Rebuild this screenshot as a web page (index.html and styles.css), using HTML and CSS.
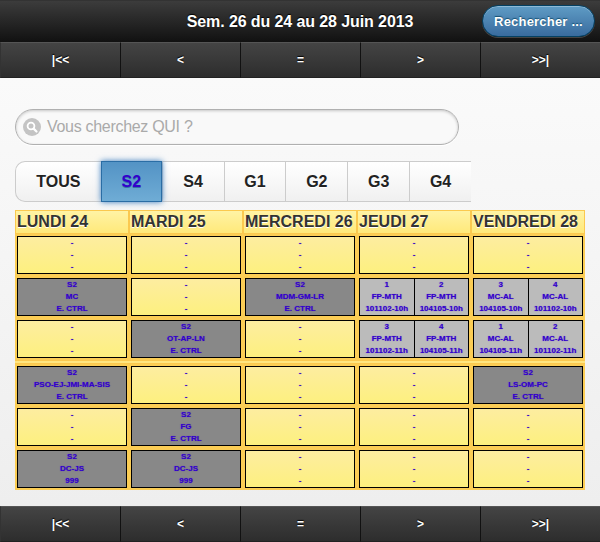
FILE: index.html
```html
<!DOCTYPE html>
<html lang="fr">
<head>
<meta charset="utf-8">
<title>Planning</title>
<link rel="stylesheet" href="styles.css">
</head>
<body>
<header class="topbar">
  <h1 class="title">Sem. 26 du 24 au 28 Juin 2013</h1>
  <a class="search-btn">Rechercher ...</a>
</header>
<nav class="navbar">
  <a class="nav-item">|&lt;&lt;</a><a class="nav-item">&lt;</a><a class="nav-item">=</a><a class="nav-item">&gt;</a><a class="nav-item">&gt;&gt;|</a>
</nav>
<main class="content">
  <div class="search-field">
    <span class="search-icon">
      <svg viewBox="0 0 18 18" width="18" height="18"><circle cx="9" cy="9" r="9" fill="#c4c4c4"/><circle cx="8" cy="8" r="3.4" fill="none" stroke="#fff" stroke-width="1.8"/><path d="M10.6 10.6 13.5 13.5" stroke="#fff" stroke-width="2.2" stroke-linecap="round"/></svg>
    </span>
    <span class="placeholder">Vous cherchez QUI ?</span>
  </div>
  <div class="segments">
    <a class="seg seg-tous">TOUS</a><a class="seg seg-active">S2</a><a class="seg">S4</a><a class="seg">G1</a><a class="seg">G2</a><a class="seg">G3</a><a class="seg">G4</a>
  </div>
  <div class="schedule">
    <div class="day">LUNDI 24</div><div class="day">MARDI 25</div><div class="day">MERCREDI 26</div><div class="day">JEUDI 27</div><div class="day">VENDREDI 28</div>

    <div class="cell"><div class="box"><p>-</p><p>-</p><p>-</p></div></div>
    <div class="cell"><div class="box"><p>-</p><p>-</p><p>-</p></div></div>
    <div class="cell"><div class="box"><p>-</p><p>-</p><p>-</p></div></div>
    <div class="cell"><div class="box"><p>-</p><p>-</p><p>-</p></div></div>
    <div class="cell"><div class="box"><p>-</p><p>-</p><p>-</p></div></div>

    <div class="cell"><div class="box busy"><p>S2</p><p>MC</p><p>E. CTRL</p></div></div>
    <div class="cell"><div class="box"><p>-</p><p>-</p><p>-</p></div></div>
    <div class="cell"><div class="box busy"><p>S2</p><p>MDM-GM-LR</p><p>E. CTRL</p></div></div>
    <div class="cell"><div class="box split"><div class="half"><p>1</p><p>FP-MTH</p><p>101102-10h</p></div><div class="half"><p>2</p><p>FP-MTH</p><p>104105-10h</p></div></div></div>
    <div class="cell"><div class="box split"><div class="half"><p>3</p><p>MC-AL</p><p>104105-10h</p></div><div class="half"><p>4</p><p>MC-AL</p><p>101102-10h</p></div></div></div>

    <div class="cell"><div class="box"><p>-</p><p>-</p><p>-</p></div></div>
    <div class="cell"><div class="box busy"><p>S2</p><p>OT-AP-LN</p><p>E. CTRL</p></div></div>
    <div class="cell"><div class="box"><p>-</p><p>-</p><p>-</p></div></div>
    <div class="cell"><div class="box split"><div class="half"><p>3</p><p>FP-MTH</p><p>101102-11h</p></div><div class="half"><p>4</p><p>FP-MTH</p><p>104105-11h</p></div></div></div>
    <div class="cell"><div class="box split"><div class="half"><p>1</p><p>MC-AL</p><p>104105-11h</p></div><div class="half"><p>2</p><p>MC-AL</p><p>101102-11h</p></div></div></div>

    <div class="gap"></div><div class="gap"></div><div class="gap"></div><div class="gap"></div><div class="gap"></div>

    <div class="cell"><div class="box busy"><p>S2</p><p>PSO-EJ-JMI-MA-SIS</p><p>E. CTRL</p></div></div>
    <div class="cell"><div class="box"><p>-</p><p>-</p><p>-</p></div></div>
    <div class="cell"><div class="box"><p>-</p><p>-</p><p>-</p></div></div>
    <div class="cell"><div class="box"><p>-</p><p>-</p><p>-</p></div></div>
    <div class="cell"><div class="box busy"><p>S2</p><p>LS-OM-PC</p><p>E. CTRL</p></div></div>

    <div class="cell"><div class="box"><p>-</p><p>-</p><p>-</p></div></div>
    <div class="cell"><div class="box busy"><p>S2</p><p>FG</p><p>E. CTRL</p></div></div>
    <div class="cell"><div class="box"><p>-</p><p>-</p><p>-</p></div></div>
    <div class="cell"><div class="box"><p>-</p><p>-</p><p>-</p></div></div>
    <div class="cell"><div class="box"><p>-</p><p>-</p><p>-</p></div></div>

    <div class="cell"><div class="box busy"><p>S2</p><p>DC-JS</p><p>999</p></div></div>
    <div class="cell"><div class="box busy"><p>S2</p><p>DC-JS</p><p>999</p></div></div>
    <div class="cell"><div class="box"><p>-</p><p>-</p><p>-</p></div></div>
    <div class="cell"><div class="box"><p>-</p><p>-</p><p>-</p></div></div>
    <div class="cell"><div class="box"><p>-</p><p>-</p><p>-</p></div></div>
  </div>
</main>
<nav class="navbar navbar-bottom">
  <a class="nav-item">|&lt;&lt;</a><a class="nav-item">&lt;</a><a class="nav-item">=</a><a class="nav-item">&gt;</a><a class="nav-item">&gt;&gt;|</a>
</nav>
</body>
</html>
```
FILE: styles.css
```css
* { box-sizing: border-box; }
html, body { margin: 0; padding: 0; }
body {
  width: 600px;
  height: 542px;
  overflow: hidden;
  font-family: "Liberation Sans", Arial, sans-serif;
  display: flex;
  flex-direction: column;
  background: #f0f0f0;
}
p { margin: 0; }

.topbar {
  height: 42px;
  flex: none;
  display: flex;
  align-items: center;
  justify-content: center;
  position: relative;
  background: linear-gradient(#3c3c3c, #111);
  border-top: 1px solid #333;
}
.title {
  margin: 0;
  font-size: 16px;
  font-weight: 700;
  letter-spacing: -.1px;
  color: #fff;
  text-shadow: 0 -1px 1px #000;
}
.search-btn {
  position: absolute;
  left: 482px;
  top: 4px;
  width: 113px;
  height: 32px;
  display: flex;
  align-items: center;
  justify-content: center;
  border: 1px solid #044062;
  border-radius: 16px;
  background: linear-gradient(#5f9cc5, #396b9e);
  box-shadow: inset 0 1px 0 rgba(255,255,255,.3), 0 1px 0 rgba(255,255,255,.2);
  color: #fff;
  font-size: 13px;
  font-weight: 700;
  letter-spacing: .2px;
  text-shadow: 0 -1px 1px #145072;
}

.navbar {
  height: 36px;
  flex: none;
  display: flex;
  background: #111;
}
.nav-item {
  width: 120px;
  display: flex;
  align-items: center;
  justify-content: center;
  color: #fff;
  font-size: 12px;
  font-weight: 700;
  text-shadow: 0 -1px 1px #000;
  background: linear-gradient(#444, #2d2d2d);
  border-top: 1px solid #555;
  border-left: 1px solid #111;
  border-bottom: 1px solid #222;
}
.nav-item:first-child { border-left-color: #333; }

.content {
  flex: 1;
  padding: 31px 15px 0;
  background: linear-gradient(#fafafa, #eee);
}

.search-field {
  width: 444px;
  height: 36px;
  display: flex;
  align-items: center;
  gap: 6px;
  padding-left: 7px;
  border: 1px solid #b0b0b0;
  border-radius: 18px;
  background: #f9f9f9;
  box-shadow: inset 0 1px 3px rgba(0,0,0,.2), 0 1px 0 #fff;
}
.search-icon { display: flex; }
.placeholder {
  font-size: 16px;
  letter-spacing: -.3px;
  color: #aaa;
}

.segments {
  display: flex;
  width: 456px;
  height: 41px;
  margin-top: 16px;
  background: linear-gradient(#fff, #f0f0f0);
  border-top: 1px solid #ccc;
  border-bottom: 1px solid #ccc;
  border-left: 1px solid #ccc;
  border-radius: 10px 0 0 10px;
}
.seg {
  width: 62px;
  display: flex;
  align-items: center;
  justify-content: center;
  font-size: 16px;
  font-weight: 700;
  color: #222;
  border-left: 1px solid #ccc;
  text-shadow: 0 1px 0 #fff;
}
.seg-tous { width: 85px; border-left: 0; }
.seg-active {
  width: 61px;
  margin: -1px 0;
  color: #3300cc;
  background: linear-gradient(#5393c5, #6facd5);
  border: 1px solid #2a6da5;
  box-shadow: 0 0 6px #387bbe;
  text-shadow: 0 1px 0 #3373a5;
  position: relative;
}

.schedule {
  display: grid;
  grid-template-columns: repeat(5, 114px);
  grid-template-rows: 24px repeat(3, 42px) 4px repeat(3, 42px);
  margin-top: 8px;
  width: 570px;
  background: #fbc94f;
}
.day {
  padding-left: 1px;
  font-size: 16px;
  font-weight: 700;
  line-height: 21px;
  color: #333;
  text-shadow: 0 1px 0 #fff;
  white-space: nowrap;
  border: 1px solid #fbc94f;
  background: linear-gradient(#fff3a5, #ffe97a);
}
.cell {
  padding: 2px;
  background: #fbcd55;
}
.gap { background: #ffe680; border-bottom: 1px solid #fbc94f; border-top: 1px solid #fbc94f; }
.box {
  height: 38px;
  border: 1px solid #000;
  background: linear-gradient(#fdeda0, #fdf07f);
  font-size: 8px;
  font-weight: 700;
  line-height: 12px;
  text-align: center;
  color: #3300cc;
  text-shadow: 0 0 1px rgba(51,0,204,.6);
}
.busy { background: #888; }
.split {
  display: flex;
  background: #bbb;
}
.half { flex: 1; }
.half + .half { border-left: 1px solid #000; }
```
